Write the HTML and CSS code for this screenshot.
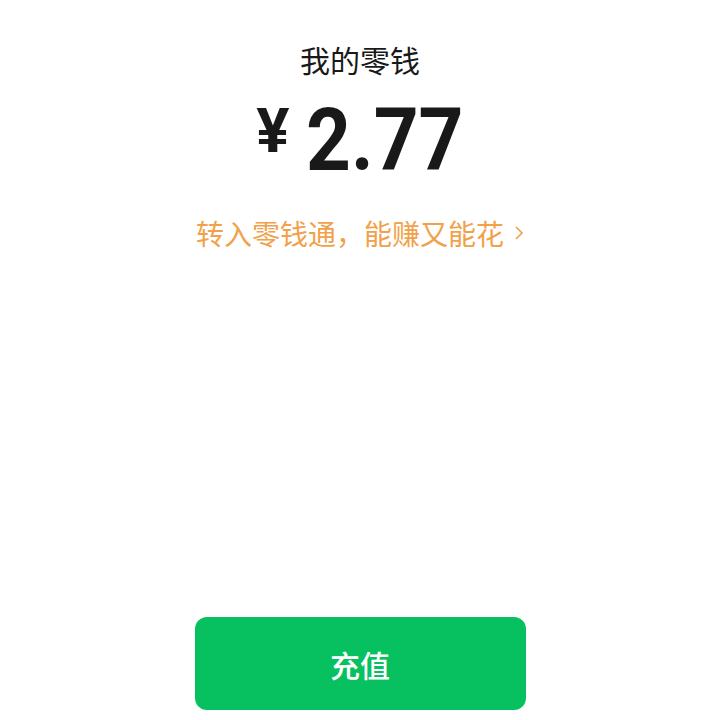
FILE: index.html
```html
<!DOCTYPE html>
<html lang="zh-CN">
  <head>
    <meta charset="UTF-8" />
    <meta name="viewport" content="width=device-width, initial-scale=1.0" />
    <title>我的零钱</title>

    <link rel="stylesheet" href="styles.css">
  </head>
  <body>
    <div id="root">
      <div class="top">
        <h1 class="title">我的零钱</h1>

        <div class="amount">
          <span class="yen">¥</span>
          <span class="num">2.77</span>
        </div>

        <a class="promo" href="#">
          转入零钱通，能赚又能花
          <svg class="chevron" width="10" height="16" viewBox="0 0 10 16">
            <polyline points="2,2 8,8 2,14" fill="none" stroke="#f1a14a" stroke-width="1.6" />
          </svg>
        </a>
      </div>

      <button class="recharge">充值</button>
    </div>
  </body>
</html>
```

FILE: styles.css
```css
body {
  margin: 0;
  background-color: white;
  font-family: "Noto Sans CJK SC", "Noto Sans", sans-serif;
}

#root {
  height: 720px;
  display: flex;
  flex-direction: column;
  align-items: center;
  justify-content: space-between;
}

.top {
  display: flex;
  flex-direction: column;
  align-items: center;
  padding-top: 44px;
}

.title {
  margin: 0;
  font-size: 30px;
  line-height: 30px;
  font-weight: normal;
  color: #191919;
}

.amount {
  display: flex;
  align-items: flex-start;
  gap: 16px;
  margin-top: 22px;
  color: #191919;
  font-family: Roboto, "Liberation Sans", sans-serif;
  font-weight: bold;
}

.yen {
  font-size: 62px;
  line-height: 62px;
  margin-top: 4px;
}

/* narrower digits, like the app's number face */
.num {
  display: inline-block;
  font-size: 88px;
  line-height: 88px;
  transform: scaleX(0.89);
  transform-origin: left center;
  margin-right: -19px;
}

.promo {
  display: flex;
  align-items: center;
  gap: 10px;
  margin-top: 35px;
  font-size: 28px;
  line-height: 28px;
  color: #f1a14a;
  text-decoration: none;
}

.recharge {
  width: 331px;
  height: 93px;
  margin-bottom: 10px;
  border: none;
  border-radius: 12px;
  background-color: #07c160;
  color: white;
  font-family: "Noto Sans CJK SC", sans-serif;
  font-size: 30px;
  font-weight: 500;
}
```
